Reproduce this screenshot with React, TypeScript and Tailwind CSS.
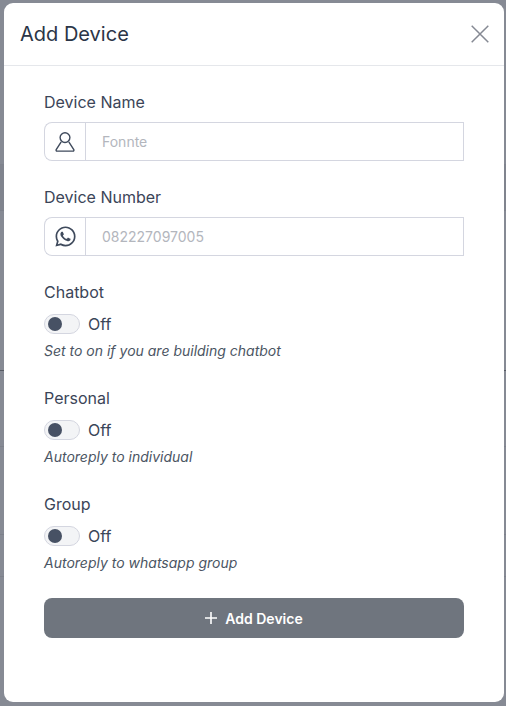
import { FaWhatsapp } from "react-icons/fa";
import type { ReactNode } from "react";

const FONT = "font-['Inter','Liberation_Sans',sans-serif]";

// dimmed page behind the dialog: only a few table lines show at the edges
const BACKDROP_ROWS = [
  "h-[165px] border-[#7f838d]",
  "h-[46px] border-[#7d818b] bg-[#80848e]",
  "h-[160px] border-[#565a63]",
  "h-[76px] border-[#7d818b]",
  "h-[88px] border-[#7d818b]",
  "h-[42px] border-[#7d818b]",
  "h-[129px] border-transparent",
];

function UserIcon() {
  return (
    <svg width="22" height="22" viewBox="0 0 22 22" fill="none" stroke="currentColor" strokeWidth="1.4">
      <circle cx="11" cy="6.6" r="4.9" />
      <path d="M7.2 10.8 2.2 18.6a1 1 0 0 0 .8 1.5h16a1 1 0 0 0 .8-1.5l-5-7.8" />
    </svg>
  );
}

function CloseIcon() {
  return (
    <svg width="18" height="18" viewBox="0 0 18 18" fill="none" stroke="currentColor" strokeWidth="1.5">
      <path d="M.7.7l16.6 16.6M17.3.7.7 17.3" />
    </svg>
  );
}

function PlusIcon() {
  return (
    <svg width="12" height="12" viewBox="0 0 12 12" fill="none" stroke="currentColor" strokeWidth="1.6">
      <path d="M6 0v12M0 6h12" />
    </svg>
  );
}

function TextField({ label, placeholder, icon }: { label: string; placeholder: string; icon: ReactNode }) {
  return (
    <div className="mb-[24px]">
      <label className="mb-[8px] block text-[16px] leading-[24px] text-[#3b4558]">{label}</label>
      <div className="flex h-[39px] w-[420px]">
        <span className="flex w-[41px] shrink-0 items-center justify-center rounded-l-[8px] border border-r-0 border-[#d4d6e0] text-[#3f4a5c]">
          {icon}
        </span>
        <input
          readOnly
          placeholder={placeholder}
          className="w-full border border-[#d4d6e0] px-4 text-[14px] outline-none placeholder:text-[#b3b6bd]"
        />
      </div>
    </div>
  );
}

function ToggleField({ label, hint }: { label: string; hint: string }) {
  return (
    <div className="mb-[25px]">
      <div className="mb-[10px] text-[16px] leading-[24px] text-[#3b4558]">{label}</div>
      <div className="flex h-[20px] items-center gap-2">
        <span className="flex h-[20px] w-[36px] items-center rounded-full border border-[#d4d6e0] bg-[#f3f4f6] pl-[3px]">
          <span className="h-[14px] w-[14px] rounded-full bg-[#475164]" />
        </span>
        <span className="text-[16px] text-[#3b4558]">Off</span>
      </div>
      <div className="mt-[7px] text-[14px] italic leading-[20px] text-[#4b5563]">{hint}</div>
    </div>
  );
}

export default function App() {
  return (
    <div className={`${FONT} relative h-[706px] w-[506px] overflow-hidden bg-[#868a94]`}>
      <div className="absolute inset-0">
        {BACKDROP_ROWS.map((row, i) => (
          <div key={i} className={`${row} border-b`} />
        ))}
      </div>

      <div className="absolute left-[4px] top-[3px] h-[699px] w-[500px] rounded-[9px] bg-white">
        <header className="flex h-[63px] items-center justify-between border-b border-[#e5e7eb] pl-[16px] pr-[15px]">
          <h2 className="text-[20px] leading-[28px] text-[#2b3547]">Add Device</h2>
          <span className="text-[#858993]">
            <CloseIcon />
          </span>
        </header>

        <form className="px-[40px] pt-[24px]">
          <TextField label="Device Name" placeholder="Fonnte" icon={<UserIcon />} />
          <TextField label="Device Number" placeholder="082227097005" icon={<FaWhatsapp size={23} />} />
          <ToggleField label="Chatbot" hint="Set to on if you are building chatbot" />
          <ToggleField label="Personal" hint="Autoreply to individual" />
          <ToggleField label="Group" hint="Autoreply to whatsapp group" />

          <button
            type="button"
            className="flex h-[40px] w-[420px] items-center justify-center gap-[8px] rounded-[8px] bg-[#6f757e] text-[14px] font-semibold text-white"
          >
            <PlusIcon />
            Add Device
          </button>
        </form>
      </div>
    </div>
  );
}
